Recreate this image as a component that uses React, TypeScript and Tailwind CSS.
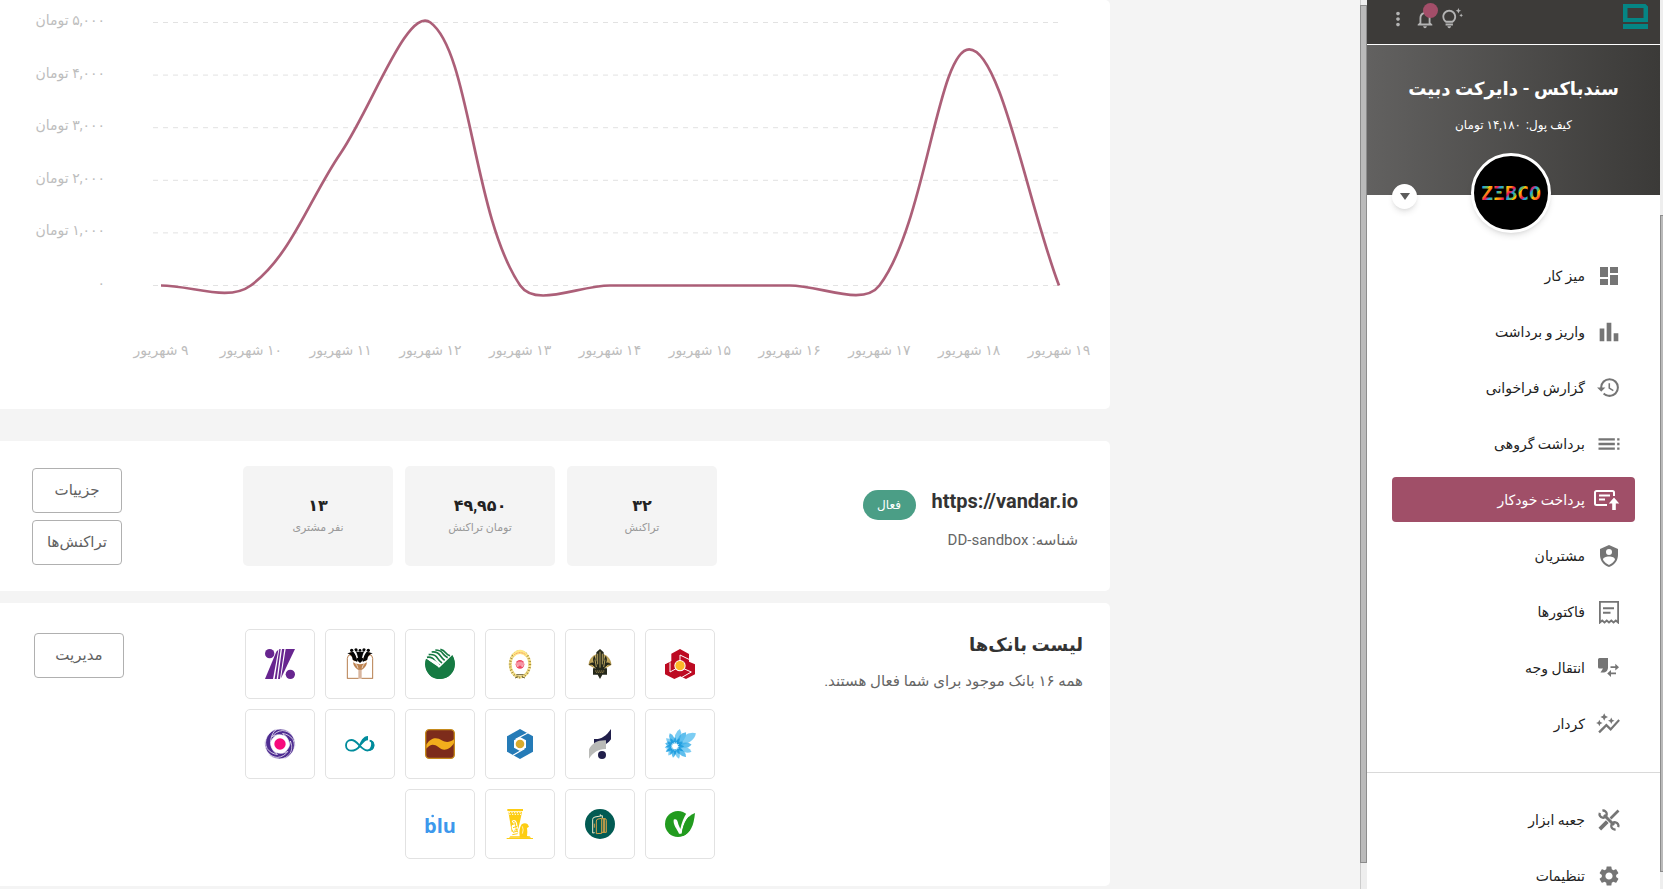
import type { ReactNode } from "react";
import {
  MdAutoGraph,
  MdBarChart,
  MdDashboard,
  MdHistory,
  MdMoreVert,
  MdNotificationsNone,
  MdOutlineTipsAndUpdates,
  MdSettings,
  MdToc,
} from "react-icons/md";

/* ---------- chart ---------- */

const DAYS = ["۹", "۱۰", "۱۱", "۱۲", "۱۳", "۱۴", "۱۵", "۱۶", "۱۷", "۱۸", "۱۹"];
const VALUES = [0, 0, 2515, 5000, 0, 0, 0, 0, 0, 4490, 0];
const TICKS = [
  { value: 5000, label: "۵,۰۰۰ تومان" },
  { value: 4000, label: "۴,۰۰۰ تومان" },
  { value: 3000, label: "۳,۰۰۰ تومان" },
  { value: 2000, label: "۲,۰۰۰ تومان" },
  { value: 1000, label: "۱,۰۰۰ تومان" },
  { value: 0, label: "۰" },
];

const LEFT = 161;
const RIGHT = 1059;
const ZERO_Y = 285;
const TOP_Y = 22;
const TENSION = 0.35;

const xAt = (i: number) => LEFT + ((RIGHT - LEFT) * i) / (VALUES.length - 1);
const yAt = (v: number) => ZERO_Y - ((ZERO_Y - TOP_Y) * v) / 5000;

type Point = { x: number; y: number };

function controls(prev: Point, cur: Point, next: Point) {
  const before = Math.hypot(cur.x - prev.x, cur.y - prev.y);
  const after = Math.hypot(next.x - cur.x, next.y - cur.y);
  const total = before + after || 1;
  const a = (TENSION * before) / total;
  const b = (TENSION * after) / total;
  return {
    inX: cur.x - a * (next.x - prev.x),
    inY: cur.y - a * (next.y - prev.y),
    outX: cur.x + b * (next.x - prev.x),
    outY: cur.y + b * (next.y - prev.y),
  };
}

function splinePath(points: Point[]) {
  const c = points.map((p, i) => controls(points[i - 1] ?? p, p, points[i + 1] ?? p));
  return points.reduce(
    (d, p, i) =>
      i === 0
        ? `M${p.x} ${p.y}`
        : `${d} C${c[i - 1].outX} ${c[i - 1].outY} ${c[i].inX} ${c[i].inY} ${p.x} ${p.y}`,
    "",
  );
}

function Chart() {
  const points = VALUES.map((v, i) => ({ x: xAt(i), y: yAt(v) + 0.5 }));
  return (
    <svg viewBox="0 0 1110 400" className="block w-full" role="img" aria-label="نمودار تراکنش‌ها">
      {TICKS.map((t) => (
        <g key={t.value}>
          <line x1="153" x2={RIGHT} y1={yAt(t.value) + 0.5} y2={yAt(t.value) + 0.5} stroke="#e2e2e2" strokeDasharray="5 5" />
          <text x="105" y={yAt(t.value) + 3} direction="rtl" textAnchor="start" className="fill-[#bdbdbd] text-[14px]">
            {t.label}
          </text>
        </g>
      ))}
      {DAYS.map((d, i) => (
        <text key={d} x={xAt(i)} y="355" direction="rtl" textAnchor="middle" className="fill-[#bdbdbd] text-[14px]">
          {`${d} شهریور`}
        </text>
      ))}
      <path d={splinePath(points)} fill="none" stroke="#a34e69" strokeWidth="2.7" strokeOpacity="0.9" />
    </svg>
  );
}

/* ---------- menu icons ---------- */

function Glyph({ children }: { children: ReactNode }) {
  return (
    <svg viewBox="0 0 24 24" className="size-6 shrink-0" fill="currentColor" aria-hidden="true">
      {children}
    </svg>
  );
}

const AutoPayIcon = () => (
  <svg viewBox="0 0 27 24" className="h-6 w-[27px] shrink-0" fill="none" stroke="currentColor" aria-hidden="true">
    <path d="M20 8V4.500a1.500 1.500 0 0 0-1.500-1.500H2.500A1.500 1.500 0 0 0 1 4.500v11A1.500 1.500 0 0 0 2.500 17H13" strokeWidth="2" />
    <path d="M5 7.500h11M5 11.500h6" strokeWidth="1.800" />
    <path d="M20 9.500l5.200 6h-3.400V22h-3.600v-6.500h-3.400z" fill="currentColor" stroke="none" />
  </svg>
);

const CustomersIcon = () => (
  <Glyph>
    <path d="M12 1 3 5v6c0 5.550 3.840 10.740 9 12 5.160-1.260 9-6.450 9-12V5l-9-4m0 4a3 3 0 0 1 3 3 3 3 0 0 1-3 3 3 3 0 0 1-3-3 3 3 0 0 1 3-3m5.130 12A9.700 9.700 0 0 1 12 20.920 9.700 9.700 0 0 1 6.870 17c-.34-.5-.63-1-.87-1.530 0-1.650 2.710-3 6-3s6 1.320 6 3c-.24.530-.53 1.030-.87 1.530z" />
  </Glyph>
);

const InvoiceIcon = () => (
  <svg viewBox="0 0 24 24" className="size-6 shrink-0" fill="none" stroke="currentColor" strokeWidth="1.800" aria-hidden="true">
    <path d="M2.900 22.500V1.900h18.200v20.600l-2.300-2-2.250 2-2.250-2-2.300 2-2.250-2-2.250 2-2.300-2z" />
    <path d="M6 8.200h11M6 12.800h7.500" strokeWidth="2" />
  </svg>
);

const TransferIcon = () => (
  <Glyph>
    <path d="M1 3.500A1.500 1.500 0 0 1 2.500 2H11v9.500c0 3-2 5-5 5H3.500L6 12.500H2.500A1.500 1.500 0 0 1 1 11z" />
    <path d="M18.300 7.800 22 11.200l-3.700 3.400v-2.500h-4.800v-1.800h4.800zM14 14v2.500h5v1.800h-5V21l-3.800-3.500z" />
  </Glyph>
);

const ToolboxIcon = () => (
  <svg viewBox="0 0 24 24" className="size-6 shrink-0" fill="none" stroke="currentColor" aria-hidden="true">
    <path d="M7 7l10 10" strokeWidth="3" />
    <path d="M2.800 4.800A3.600 3.600 0 1 0 5.400 2.600M21.200 19.200a3.600 3.600 0 1 0-2.600 2.200" strokeWidth="2.300" />
    <path d="M21.500 2.500l-8 8" strokeWidth="2.600" />
    <path d="M10.300 13.700l-7.500 7.500" strokeWidth="3.800" />
  </svg>
);

type Item = { label: string; icon: ReactNode; active?: boolean };

const MENU: Item[] = [
  { label: "میز کار", icon: <MdDashboard className="size-6 shrink-0" /> },
  { label: "واریز و برداشت", icon: <MdBarChart className="-mr-[2px] size-7 shrink-0" /> },
  { label: "گزارش فراخوانی", icon: <MdHistory className="size-[25px] shrink-0" /> },
  { label: "برداشت گروهی", icon: <MdToc className="-mr-[2px] size-7 shrink-0" /> },
  { label: "پرداخت خودکار", icon: <AutoPayIcon />, active: true },
  { label: "مشتریان", icon: <CustomersIcon /> },
  { label: "فاکتورها", icon: <InvoiceIcon /> },
  { label: "انتقال وجه", icon: <TransferIcon /> },
  { label: "کردار", icon: <MdAutoGraph className="size-[26px] shrink-0" /> },
];

const TOOLS: Item[] = [
  { label: "جعبه ابزار", icon: <ToolboxIcon /> },
  { label: "تنظیمات", icon: <MdSettings className="size-6 shrink-0" /> },
];

function Menu({ items }: { items: Item[] }) {
  return (
    <ul className="flex flex-col gap-[11px] px-[25px]">
      {items.map((it) => (
        <li key={it.label}>
          <a
            href="#"
            aria-current={it.active ? "page" : undefined}
            className={
              it.active
                ? "flex h-[45px] items-center gap-3 rounded bg-[#a04f68] px-[14px] text-sm text-white"
                : "flex h-[45px] items-center gap-3 rounded px-[14px] text-sm text-[#222]"
            }
          >
            <span className={it.active ? "flex w-6 items-center text-white" : "flex w-6 items-center text-[#757575]"}>
              {it.icon}
            </span>
            {it.label}
          </a>
        </li>
      ))}
    </ul>
  );
}

/* ---------- bank logos ---------- */

function Logo({ children }: { children: ReactNode }) {
  return (
    <svg viewBox="0 0 90 90" className="size-[30px] overflow-visible" aria-hidden="true">
      {children}
    </svg>
  );
}

const range = (n: number) => Array.from({ length: n }, (_, i) => i);

const Mellat = () => (
  <Logo>
    <path d="M45 0 72 15V38L90 46V76L63 90 46 82 28 90 0 76V46L19 36V14z" fill="#bd0a22" />
    <path d="M45 36V18L76 33M15 40v29l22-12M54 58l25 11-30 17" fill="none" stroke="#fff" strokeWidth="3" />
    <path d="M72 14v20l18 9V10zM18 10v26L0 45V10z" fill="#fff" />
    <circle cx="45" cy="50" r="17" fill="#fff" />
    <circle cx="45" cy="50" r="14" fill="#fcb827" />
  </Logo>
);

const Sepah = () => (
  <Logo>
    <defs>
      <radialGradient id="sepah">
        <stop offset="0" stopColor="#f0dc94" />
        <stop offset="1" stopColor="#b0944a" />
      </radialGradient>
    </defs>
    <path d="M11 48a34 34 0 1 1 68 0L64 56H26z" fill="url(#sepah)" />
    <path d="M11 48c10-3 15 2 18 10h-5v19h14l7 13 7-13h14V58h-5c3-8 8-13 18-10-4-6-10-9-17-6 6-7 4-16 0-22-4 6-4 12-6 18V10L45 0l-11 10v28c-2-6-2-12-6-18-4 6-6 15 0 22-7-3-13 0-17 6z" fill="#25281b" />
    <path d="M45 8v48M38 14v32M52 14v32M30 32l4 22M60 32l-4 22M20 48l12 10M70 48 58 58" stroke="#d3ba6b" strokeWidth="2.500" fill="none" />
    <path d="M30 66h30M33 70h24" stroke="#c4a85d" strokeWidth="2" strokeDasharray="4 2" />
  </Logo>
);

const Melli = () => (
  <Logo>
    <ellipse cx="45" cy="46" rx="29" ry="38" fill="none" stroke="#f0d874" strokeWidth="9" strokeDasharray="6 1" />
    <ellipse cx="45" cy="46" rx="30" ry="39" fill="none" stroke="#8a7430" strokeWidth="7" strokeDasharray="2 7" />
    <path d="M22 17q23-30 46 0l-6 7q-17-13-34 0z" fill="#ffe887" />
    <path d="M28 17q17-12 34 0" stroke="#f58a5e" strokeWidth="3" fill="none" strokeDasharray="3 2" />
    <ellipse cx="45" cy="46" rx="24" ry="31" fill="#fff" />
    <circle cx="45" cy="46" r="13" fill="#ef4863" />
    <path d="M36 40v10q4 5 6-1V38M54 40v10q-4 5-6-1V38" stroke="#fff" strokeWidth="2.500" fill="none" />
    <path d="M34 77h22M30 87l10-4M60 87l-10-4" stroke="#6c6238" strokeWidth="3" />
  </Logo>
);

const Mehr = () => (
  <Logo>
    <circle cx="45" cy="45" r="45" fill="#167a43" />
    <path d="M0 28 15 8 33-3h42l8 24-38 36z" fill="#fff" />
    <g fill="none" stroke="#167a43" strokeWidth="5">
      <path d="M6 25c12-2 18 2 23 10s8 10 15 14" />
      <path d="M11 17c14-2 22 3 27 11s8 10 13 14" />
      <path d="M20 9c14-2 21 4 26 11s8 10 13 14" />
      <path d="M31 3c12 0 19 5 23 11s9 9 14 12" />
      <path d="M46 1c9 2 12 5 16 10s7 7 13 9" />
    </g>
    <path d="M82 18 42 57 4 29C-2 50 4 90 45 90s52-44 37-72z" fill="#167a43" />
    <path d="M18 36q15 5 23 20l5-6Q37 36 20 30z" fill="#fff" />
  </Logo>
);

const Pasargad = () => (
  <Logo>
    <path d="M7 89V28q0-10 12-13M83 89V28q0-10-12-13M7 88h34M49 88h34" fill="none" stroke="#b67d4d" strokeWidth="3" />
    <path d="M40 89V52h10v37z" fill="#d8b59e" />
    <path d="M24 40q21 12 42 0-2 15-15 22H39Q26 55 24 40z" fill="#bd824f" />
    <path d="M15 14q14 4 16 22M75 14q-14 4-16 22" stroke="#bd824f" strokeWidth="10" fill="none" />
    <g fill="#050505">
      <path d="M7 13 25 8q10 12 12 31l-14-7Q22 17 7 13z" />
      <path d="M83 13 65 8Q55 20 53 39l14-7Q68 17 83 13z" />
      <path d="M33 8h24q-5 12-3 26l-9 8-9-8q2-14-3-26z" />
      <circle cx="20" cy="4" r="5" />
      <circle cx="33" cy="3" r="5" />
      <circle cx="45" cy="4" r="4" />
      <circle cx="57" cy="3" r="5" />
      <circle cx="70" cy="4" r="5" />
    </g>
    <path d="M27 3q9 10 11 24M63 3q-9 10-11 24" stroke="#fff" strokeWidth="2.500" fill="none" />
    <path d="M29 42q8 4 10 16M61 42q-8 4-10 16" stroke="#fff" strokeWidth="2" fill="none" />
  </Logo>
);

const Novin = () => (
  <Logo>
    <g fill="#67258f">
      <circle cx="14" cy="14" r="14" />
      <circle cx="76" cy="76" r="14" />
      <path d="M34 8 40 2 24 90H0z" />
      <path d="M43 0h4L35 90h-6zM51 0h7L45 90h-6z" />
      <path d="M62 0h28L48 88z" />
    </g>
  </Logo>
);

const PETALS: [angle: number, length: number][] = [
  [-72, 31],
  [-48, 36],
  [-22, 42],
  [16, 54],
  [38, 54],
  [58, 74],
  [84, 50],
  [108, 52],
  [134, 46],
  [162, 39],
  [190, 35],
  [216, 34],
  [240, 32],
  [264, 31],
];

const BluePetals = () => (
  <Logo>
    {PETALS.map(([angle, length], i) => (
      <path
        key={`outer-${angle}`}
        d={`M30 52Q${30 - length / 3} ${52 - length * 0.7} 30 ${52 - length} ${30 + length / 3} ${52 - length * 0.7} 30 52z`}
        fill={i % 2 ? "#5cc0f0" : "#37aee8"}
        fillOpacity="0.800"
        transform={`rotate(${angle} 30 52)`}
      />
    ))}
    {range(12).map((i) => (
      <path
        key={`inner-${i}`}
        d="M30 52Q21 36 30 24 39 36 30 52z"
        fill="#0b93da"
        fillOpacity="0.700"
        transform={`rotate(${i * 30} 30 52)`}
      />
    ))}
    <circle cx="30" cy="52" r="9" fill="#fff" />
    <circle cx="30" cy="52" r="11" fill="none" stroke="#fff" strokeWidth="3" strokeDasharray="3 3" />
  </Logo>
);

const Tosee = () => (
  <Logo>
    <path d="M27 30c20 2 36-8 51-30v31c-8 11-17 17-27 18V35H27z" fill="#211f4b" />
    <path d="M27 30h28l-4 17-24 0z" fill="#211f4b" />
    <path d="M12 89V61c9-18 25-28 51-27v26c-22-1-38 10-51 29z" fill="#b9bab7" />
    <circle cx="51" cy="78" r="12" fill="#211f4b" />
  </Logo>
);

const Hexagon = () => (
  <Logo>
    <path d="M45 0 84 22v46L45 90 6 68V22z" fill="#257bb7" />
    <path d="M45 24 63 34v22L45 66 27 56V34z" fill="#fff" />
    <path d="M32 31 68 12M58 59 24 79" stroke="#fff" strokeWidth="3.500" />
    <circle cx="45" cy="45" r="13" fill="#d9ab2c" />
  </Logo>
);

const Sarmayeh = () => (
  <Logo>
    <rect x="2" y="2" width="86" height="86" rx="11" fill="#7d2c1b" stroke="#c58a1c" strokeWidth="4" />
    <path d="M4 59V47C20 22 38 26 50 34c14 8 24 6 37-3v11C72 66 53 66 40 54 27 44 16 44 4 59z" fill="#f2ae1c" />
  </Logo>
);

const Infinity = () => (
  <Logo>
    <path
      d="M44 52C35 63 26 65 18 65 8 65 3 57 3 49s6-16 16-16c20 0 27 30 48 31 11 0 18-6 18-15 0-8-5-13-11-14"
      fill="none"
      stroke="#018c9c"
      strokeWidth="5.500"
    />
    <path d="M37 60C47 35 55 21 69 21v13C56 35 50 52 37 60z" fill="#018c9c" />
    <path d="M74 33c20 2 22 34-10 34 12-6 20-22 10-34z" fill="#018c9c" />
  </Logo>
);

const Swirl = () => (
  <Logo>
    {range(6).map((i) => (
      <path
        key={i}
        d="M80 14C60-4 30-6 14 18 8 30 9 44 14 54 15 35 26 20 44 14 56 10 70 9 80 14z"
        fill="#4e2c91"
        stroke="#fff"
        strokeWidth="2"
        transform={`rotate(${i * 60} 45 45)`}
      />
    ))}
    <circle cx="45" cy="45" r="20" fill="#fff" />
    <circle cx="45" cy="45" r="17" fill="#f70a7d" />
  </Logo>
);

const GreenCheck = () => (
  <Logo>
    <circle cx="39" cy="45" r="39" fill="#229b1f" />
    <path d="M26 32C34 28 38 34 40 46l6 14C50 42 56 26 66 10L90-4v15C68 20 56 38 50 74h-8C37 60 24 50 26 32z" fill="#fff" />
    <path d="M90 12C68 20 56 38 50 75l4 6C78 70 86 50 90 12z" fill="#229b1f" />
  </Logo>
);

const Door = () => (
  <Logo>
    <circle cx="45" cy="45" r="45" fill="#025b53" />
    <g fill="none" strokeWidth="3">
      <path d="M29 71l-6 1V31q0-6 7-7l22-4v7M46 21v-5" stroke="#eee9c9" />
      <path d="M34 74V36q0-5 5-6l11-2v45zM50 29h10q4 0 4 5v36H50M55 29v41M59 29v41" stroke="#d7a348" />
      <path d="M28 44v12" stroke="#d7a348" />
    </g>
  </Logo>
);

const Parsian = () => (
  <Logo>
    <path d="M7 0h47v6H7zM10 8h41l-3 16-10 44H20z" fill="#fdcd13" />
    <path d="M11 11h39M13 16h35" stroke="#fff" strokeWidth="3" strokeDasharray="4 4" />
    <path d="M20 36q12-8 16 6 0 12 8 24l-4 16H22q8-12 0-20-6-12 4-16z" fill="#fff" />
    <path d="M24 38q8-2 8 10t6 22M22 46l10-2M24 56l12-4M28 64l11-4M24 70l14-4M22 77l16-3" stroke="#fdcd13" strokeWidth="3" fill="none" />
    <path d="M44 82q-3-22 6-36 10-6 18 0l4 7-6 4q2 12 0 24l10 5H44z" fill="#fdcd13" />
    <path d="M52 52q5 10 0 22" stroke="#fff" strokeWidth="2" fill="none" />
    <path d="M5 87h79v3H5zM16 82h58l4 4H12z" fill="#fdcd13" />
  </Logo>
);

const Blu = () => (
  <svg viewBox="-15 -15 120 120" className="size-10" aria-hidden="true">
    <text x="45" y="72" textAnchor="middle" className="fill-[#3d98ec] font-['Open_Sans'] text-[60px] font-bold">
      blu
    </text>
    <circle cx="23" cy="21" r="4" fill="#3d98ec" />
  </svg>
);

const BANKS: { name: string; logo: ReactNode }[] = [
  { name: "ملت", logo: <Mellat /> },
  { name: "سپه", logo: <Sepah /> },
  { name: "ملی", logo: <Melli /> },
  { name: "مهر ایران", logo: <Mehr /> },
  { name: "پاسارگاد", logo: <Pasargad /> },
  { name: "اقتصاد نوین", logo: <Novin /> },
  { name: "سامان", logo: <BluePetals /> },
  { name: "توسعه تعاون", logo: <Tosee /> },
  { name: "صنعت و معدن", logo: <Hexagon /> },
  { name: "آینده", logo: <Sarmayeh /> },
  { name: "خاورمیانه", logo: <Infinity /> },
  { name: "ایران زمین", logo: <Swirl /> },
  { name: "قرض‌الحسنه", logo: <GreenCheck /> },
  { name: "کارآفرین", logo: <Door /> },
  { name: "پارسیان", logo: <Parsian /> },
  { name: "بلو", logo: <Blu /> },
];

/* ---------- content ---------- */

const STATS = [
  { value: "۳۲", label: "تراکنش" },
  { value: "۴۹,۹۵۰", label: "تومان تراکنش" },
  { value: "۱۳", label: "نفر مشتری" },
];

function OutlineButton({ children }: { children: ReactNode }) {
  return (
    <button type="button" className="h-[45px] w-[90px] rounded border border-[#b0b0b0] bg-white text-[15px] text-[#616161]">
      {children}
    </button>
  );
}

function Main() {
  return (
    <main dir="rtl" className="min-w-0 flex-1 overflow-hidden bg-[#f4f4f4] pr-[250px]">
      <section className="mb-8 rounded-r-[5px] bg-white pb-[9px]">
        <Chart />
      </section>

      <section className="mb-3 flex h-[150px] items-center rounded-r-[5px] bg-white px-8">
        <div className="min-w-0 flex-1 pt-[6px]">
          <div className="flex h-[34px] gap-4">
            <h2 className="text-xl leading-[30px] font-bold text-[#333]">https://vandar.io</h2>
            <span className="flex h-[30px] w-[53px] items-center justify-center self-end rounded-full bg-[#4b9e86] text-xs text-white">
              فعال
            </span>
          </div>
          <p className="mt-2 text-[15px] leading-6 text-[#666]">شناسه: DD-sandbox</p>
        </div>
        <div className="flex gap-3">
          {STATS.map((s) => (
            <div key={s.label} className="flex h-[100px] w-[150px] flex-col items-center justify-center rounded-[5px] bg-[#f4f4f4]">
              <strong className="text-base leading-6 font-bold text-[#222]">{s.value}</strong>
              <span className="text-[11px] leading-5 text-[#999]">{s.label}</span>
            </div>
          ))}
        </div>
        <div className="mr-[121px] flex flex-col gap-[7px]">
          <OutlineButton>جزییات</OutlineButton>
          <OutlineButton>تراکنش‌ها</OutlineButton>
        </div>
      </section>

      <section className="mb-1 flex items-start rounded-r-[5px] bg-white pt-[26px] pr-[27px] pb-[27px] pl-[34px]">
        <div className="min-w-0 flex-1">
          <h2 className="text-lg leading-8 font-bold text-[#333]">لیست بانک‌ها</h2>
          <p className="mt-2 text-[15px] leading-6 text-[#666]">همه ۱۶ بانک موجود برای شما فعال هستند.</p>
        </div>
        <ul className="grid grid-cols-6 gap-[10px]">
          {BANKS.map((b) => (
            <li key={b.name} title={b.name} className="flex size-[70px] items-center justify-center rounded-[5px] border border-[#e2e2e2]">
              {b.logo}
            </li>
          ))}
        </ul>
        <div className="mt-1 mr-[121px]">
          <OutlineButton>مدیریت</OutlineButton>
        </div>
      </section>
      <section className="h-24 rounded-r-[5px] bg-white" />
    </main>
  );
}

function Sidebar() {
  return (
    <aside dir="rtl" className="flex w-[293px] shrink-0 flex-col overflow-hidden bg-white">
      <header className="flex h-11 shrink-0 items-start justify-between bg-[#3d3b39] pt-1 pr-3 pl-5">
        <a href="#" aria-label="وندار">
          <svg viewBox="0 0 25 25" className="size-[25px]" aria-hidden="true">
            <path d="M0 0h22.500L25 2.500V18H0zM4.500 4v10h16V4z" fill="#058584" fillRule="evenodd" />
            <path d="M0 20h25v5H0z" fill="#058584" />
          </svg>
        </a>
        <div className="flex items-center gap-[5px] pt-1 text-[#b4b4b4]">
          <button type="button" aria-label="راهنما">
            <MdOutlineTipsAndUpdates className="size-[22px]" />
          </button>
          <button type="button" aria-label="اعلان‌ها" className="relative">
            <MdNotificationsNone className="size-[22px]" />
            <span className="absolute -top-[5px] -right-[2px] size-[15px] rounded-full bg-[#a34e69]" />
          </button>
          <button type="button" aria-label="بیشتر">
            <MdMoreVert className="size-[22px]" />
          </button>
        </div>
      </header>

      <div className="relative mt-px h-[150px] shrink-0 bg-linear-to-r from-[#626160] to-[#3b3a38] pt-[26px] text-center text-white">
        <h1 className="text-lg leading-9 font-bold">سندباکس - دایرکت دبیت</h1>
        <p className="mt-[6px] text-xs leading-6">
          کیف پول: <span className="mr-[2px]">۱۴,۱۸۰ تومان</span>
        </p>
        <div className="absolute -bottom-[38px] left-[104px] flex size-20 items-center justify-center rounded-full border-[3px] border-white bg-black shadow-md">
          <svg viewBox="0 0 66 28" className="w-[66px]" role="img" aria-label="ZEBCO">
            <defs>
              <linearGradient id="zebco" x1="0" y1="0" x2="9" y2="9" gradientUnits="userSpaceOnUse" spreadMethod="repeat">
                <stop offset="0" stopColor="#ffd400" />
                <stop offset="0.300" stopColor="#ff7a1c" />
                <stop offset="0.500" stopColor="#f0105a" />
                <stop offset="0.700" stopColor="#19a7e8" />
                <stop offset="1" stopColor="#7ac043" />
              </linearGradient>
            </defs>
            <text x="33" y="21" textAnchor="middle" fill="url(#zebco)" className="font-['DejaVu_Sans_Mono'] text-[20px] font-bold">
              ZΞBCO
            </text>
          </svg>
        </div>
        <button
          type="button"
          aria-label="تغییر کسب و کار"
          className="absolute -bottom-[14px] left-[25px] flex size-[25px] items-center justify-center rounded-full bg-white shadow-md"
        >
          <svg viewBox="0 0 10 7" className="w-[10px]" aria-hidden="true">
            <path d="M0 0h10L5 7z" fill="#5c5c5c" />
          </svg>
        </button>
      </div>

      <nav className="shrink-0 pt-[58px]">
        <Menu items={MENU} />
        <div className="mt-[26px] border-t border-[#d9d9d9] pt-6">
          <Menu items={TOOLS} />
        </div>
      </nav>
    </aside>
  );
}

export default function App() {
  return (
    <div className="flex h-screen overflow-hidden font-[Roboto,'DejaVu_Sans',sans-serif]">
      <Main />
      <div className="flex w-[7px] shrink-0 flex-col border-l border-[#ccc] bg-[#eee] pt-[5px] pb-[26px]">
        <div className="-ml-px flex-1 border border-[#8c8c8c] bg-[#bababa]" />
      </div>
      <Sidebar />
      <div className="flex w-[3px] shrink-0 flex-col bg-[#eee] pt-[215px] pb-[17px]">
        <div className="flex-1 border border-r-0 border-[#8c8c8c] bg-[#bababa]" />
      </div>
    </div>
  );
}
